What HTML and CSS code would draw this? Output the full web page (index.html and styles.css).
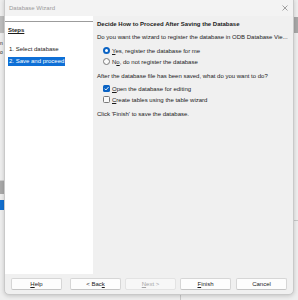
FILE: index.html
```html
<!DOCTYPE html>
<html>
<head>
<meta charset="utf-8">
<link rel="stylesheet" href="styles.css">
</head>
<body>
<div class="desktop">
  <div class="app-left-band"></div>
  <div class="app-left-text">n<br>o</div>
  <div class="app-left-gray"></div>
  <div class="app-left-blue"></div>
  <div class="app-right-band"></div>
  <div class="app-right-line"></div>
  <div class="app-bottom-line"></div>

  <div class="dialog">
    <div class="titlebar">
      <span class="title">Database Wizard</span>
      <svg class="close" width="6" height="6" viewBox="0 0 6 6"><path d="M0.5 0.5L5.5 5.5M5.5 0.5L0.5 5.5" stroke="#8a8a8a" stroke-width="0.8" fill="none"/></svg>
    </div>
    <div class="main">
      <div class="steps">
        <div class="steps-inner">
          <div class="steps-head">Steps</div>
          <div class="step">1. Select database</div>
          <div class="step active">2. Save and proceed</div>
        </div>
      </div>
      <div class="content">
        <div class="heading">Decide How to Proceed After Saving the Database</div>
        <div class="line q1">Do you want the wizard to register the database in ODB Database Vie...</div>
        <div class="group">
          <div class="opt"><span class="radio on"></span><span><u>Y</u>es, register the database for me</span></div>
          <div class="opt"><span class="radio"></span><span>N<u>o</u>, do not register the database</span></div>
        </div>
        <div class="line q2">After the database file has been saved, what do you want to do?</div>
        <div class="group g2">
          <div class="opt"><span class="check on"><svg width="7" height="7" viewBox="0 0 7 7"><path d="M1.5 3.6L2.9 5L5.6 2" stroke="#fff" stroke-width="0.9" fill="none"/></svg></span><span><u>O</u>pen the database for editing</span></div>
          <div class="opt"><span class="check"></span><span><u>C</u>reate tables using the table wizard</span></div>
        </div>
        <div class="line q3">Click 'Finish' to save the database.</div>
      </div>
    </div>
    <div class="buttons">
      <button class="btn help"><u>H</u>elp</button>
      <button class="btn">&lt; Bac<u>k</u></button>
      <button class="btn disabled"><u>N</u>ext &gt;</button>
      <button class="btn"><u>F</u>inish</button>
      <button class="btn cancel">Cancel</button>
    </div>
  </div>
</div>
</body>
</html>
```

FILE: styles.css
```css
html, body {
  margin: 0;
  padding: 0;
}
body {
  width: 298px;
  height: 300px;
  overflow: hidden;
  background: #ededed;
  font-family: "Liberation Sans", Arial, sans-serif;
  font-size: 6px;
  color: #1b1b1b;
}
.desktop {
  position: relative;
  width: 298px;
  height: 300px;
  background: #eeeeee;
}
.app-left-band {
  position: absolute;
  left: 0; top: 16px;
  width: 4px; height: 17px;
  background: #bdbdbd;
}
.app-left-text {
  position: absolute;
  left: 0; top: 39px;
  font-size: 5px;
  line-height: 9px;
  color: #222;
}
.app-left-gray {
  position: absolute;
  left: 0; top: 180px;
  width: 4px; height: 13px;
  background: #a9a9a9;
  border-top: 1px solid #d0d0d0;
}
.app-left-blue {
  position: absolute;
  left: 0; top: 200px;
  width: 4px; height: 10px;
  background: #1470d0;
}
.app-right-band {
  position: absolute;
  right: 0; top: 17px;
  width: 4px; height: 16px;
  background: #a8a8a8;
}
.app-right-line {
  position: absolute;
  right: 0; top: 220px;
  width: 4px; height: 1px;
  background: #c8c8c8;
}
.app-bottom-line {
  position: absolute;
  left: 180px; top: 295px;
  width: 1px; height: 5px;
  background: #c8c8c8;
}
.dialog {
  position: absolute;
  left: 4px; top: -1px;
  width: 288px;
  height: 294px;
  background: #f0f0f0;
  border: 1px solid #c9c9c9;
  border-radius: 0 0 5px 5px;
  box-shadow: 0 1px 4px rgba(0,0,0,0.18);
  display: flex;
  flex-direction: column;
}
.titlebar {
  height: 16px;
  flex: none;
  display: flex;
  align-items: center;
  justify-content: space-between;
  padding: 0 4px 0 4px;
  background: #f3f3f3;
}
.title {
  color: #9a9a9a;
  font-size: 6px;
}
.close {
  display: block;
  margin-right: 1px;
}
.main {
  display: flex;
  height: 258px;
  flex: none;
}
.steps {
  width: 88px;
  background: #ffffff;
  padding-top: 5px;
}
.steps-inner {
  border-top: 1px solid #9c9c9c;
  padding: 4px 0 0 3px;
}
.steps-head {
  font-weight: bold;
  text-decoration: underline;
  line-height: 9px;
  height: 9px;
  margin-bottom: 10px;
}
.step {
  display: table;
  line-height: 9px;
  height: 9px;
  padding: 0 1px;
  margin-bottom: 3px;
}
.step.active {
  background: #0e6fd6;
  color: #ffffff;
}
.content {
  flex: 1;
  padding: 4px 0 0 4px;
  overflow: hidden;
  white-space: nowrap;
}
.heading {
  font-weight: bold;
  line-height: 9px;
  height: 9px;
}
.line {
  line-height: 9px;
  height: 9px;
}
.q1 { margin-top: 4px; }
.group { margin-top: 3px; }
.q2 { margin-top: 5px; }
.g2 { margin-top: 2px; }
.q3 { margin-top: 5px; }
.opt {
  height: 11px;
  display: flex;
  align-items: center;
  padding-left: 6px;
  gap: 2px;
}
.radio {
  width: 7px;
  height: 7px;
  box-sizing: border-box;
  border-radius: 50%;
  border: 1px solid #7a7a7a;
  background: #fafafa;
  flex: none;
}
.radio.on {
  border: 2px solid #0a63c4;
  background: #ffffff;
}
.check {
  width: 7px;
  height: 7px;
  box-sizing: border-box;
  border-radius: 1.5px;
  border: 1px solid #7a7a7a;
  background: #fafafa;
  flex: none;
  display: flex;
}
.check.on {
  border: none;
  background: #0a63c4;
}
.check svg { display: block; }
.buttons {
  flex: 1;
  display: flex;
  align-items: flex-start;
  padding: 4px 0 0 6px;
  gap: 4px;
}
.btn {
  width: 51px;
  height: 12px;
  box-sizing: border-box;
  margin: 0;
  padding: 0;
  font-family: inherit;
  font-size: 6px;
  line-height: 10px;
  color: #1b1b1b;
  background: #fdfdfd;
  border: 1px solid #d6d6d6;
  border-bottom-color: #c4c4c4;
  border-radius: 2px;
}
.btn.help { margin-right: 4px; }
.btn.cancel { margin-left: 1px; }
.btn.disabled {
  color: #a5a5a5;
  background: #f7f7f7;
  border-color: #e3e3e3;
}
```
